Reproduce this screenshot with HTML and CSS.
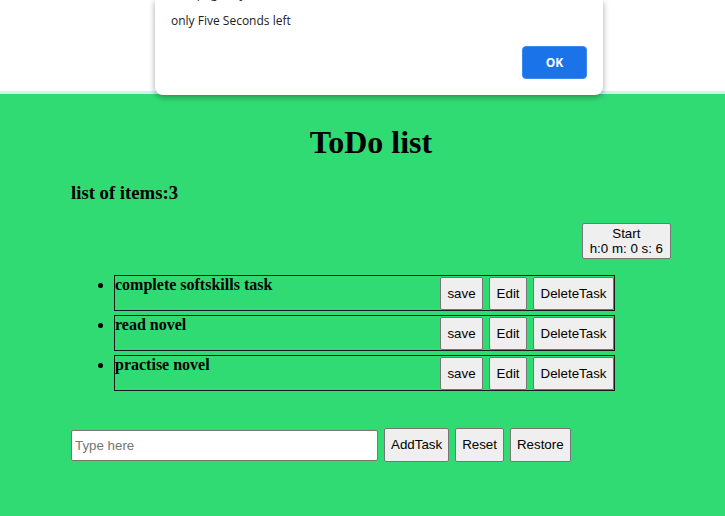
FILE: index.html
```html
<!DOCTYPE html>
<html lang="en">
<head>
<meta charset="utf-8">
<title>ToDo list</title>
<link rel="stylesheet" href="styles.css">
</head>
<body>
<div class="topbar"></div>
<main class="page">
  <div class="container">
    <h1 class="title">ToDo list</h1>
    <h3 class="count">list of items:3</h3>
    <div class="timer-row">
      <button class="btn timer">Start<br>h:0 m: 0 s: 6</button>
    </div>
    <ul class="tasks">
      <li class="task">
        <div class="task-box">
          <b class="task-text">complete softskills task</b>
          <div class="task-actions">
            <button class="btn">save</button>
            <button class="btn">Edit</button>
            <button class="btn">DeleteTask</button>
          </div>
        </div>
      </li>
      <li class="task">
        <div class="task-box">
          <b class="task-text">read novel</b>
          <div class="task-actions">
            <button class="btn">save</button>
            <button class="btn">Edit</button>
            <button class="btn">DeleteTask</button>
          </div>
        </div>
      </li>
      <li class="task">
        <div class="task-box">
          <b class="task-text">practise novel</b>
          <div class="task-actions">
            <button class="btn">save</button>
            <button class="btn">Edit</button>
            <button class="btn">DeleteTask</button>
          </div>
        </div>
      </li>
    </ul>
    <div class="add-row">
      <input class="task-input" type="text" placeholder="Type here">
      <button class="btn add-btn">AddTask</button>
      <button class="btn add-btn">Reset</button>
      <button class="btn add-btn">Restore</button>
    </div>
  </div>
</main>
<div class="dialog">
  <div class="dialog-title">This page says</div>
  <div class="dialog-message">only Five Seconds left</div>
  <div class="dialog-actions">
    <button class="ok-btn">OK</button>
  </div>
</div>
</body>
</html>
```
FILE: styles.css
```css
html, body {
  margin: 0;
  padding: 0;
}

body {
  font-family: "Liberation Serif", "Times New Roman", serif;
  background: #31db74;
  width: 725px;
  height: 516px;
  overflow: hidden;
  position: relative;
}

.topbar {
  height: 91px;
  background: #ffffff;
  border-bottom: 3px solid #c8f6f1;
}

.page {
  background: #31db74;
  height: 422px;
}

.container {
  margin-left: 71px;
  width: 600px;
  padding-top: 30px;
}

.title {
  margin: 0;
  font-size: 32px;
  line-height: 37px;
  font-weight: bold;
  text-align: center;
  color: #000;
}

.count {
  margin: 21px 0 0;
  font-size: 18.72px;
  line-height: 22px;
  font-weight: bold;
  color: #000;
}

.btn {
  font-family: "Liberation Sans", Arial, sans-serif;
  font-size: 13.33px;
  line-height: 15px;
  color: #000;
  background: #efefef;
  border: 1px solid #767676;
  border-radius: 2px;
  padding: 8px 6.5px;
  margin: 0;
}

.timer-row {
  display: flex;
  justify-content: flex-end;
  margin-top: 19px;
}

.timer {
  padding: 2px 7px;
  text-align: center;
}

.tasks {
  margin: 16px 0 0;
  padding-left: 43px;
  font-size: 16px;
}

.task {
  margin-bottom: 4px;
}

.task-box {
  display: flex;
  align-items: flex-start;
  width: 501px;
  height: 36px;
  box-sizing: border-box;
  border: 1px solid #1a1a1a;
}

.task-text {
  flex: 1;
  font-size: 16px;
  line-height: normal;
}

.task-actions {
  display: flex;
  gap: 6px;
  margin-top: 1px;
}

.add-row {
  display: flex;
  align-items: center;
  gap: 6px;
  margin-top: 37px;
}

.task-input {
  width: 307px;
  height: 31px;
  box-sizing: border-box;
  margin: 0;
  padding: 1px 3px;
  border: 1px solid #767676;
  border-radius: 2px;
  background: #fff;
  font-family: "Liberation Sans", Arial, sans-serif;
  font-size: 13.33px;
}

.task-input::placeholder {
  color: #757575;
}

.add-btn {
  line-height: 16px;
  padding: 8px 6px;
}

.dialog {
  position: absolute;
  left: 155px;
  top: 0;
  width: 448px;
  height: 95px;
  box-sizing: border-box;
  padding: 13px 16px 16px;
  background: #fff;
  border-radius: 0 0 8px 8px;
  box-shadow: 0 2px 6px rgba(0, 0, 0, 0.35);
  font-family: "Open Sans", "Noto Sans", sans-serif;
  display: flex;
  flex-direction: column;
}

.dialog-title {
  position: absolute;
  left: 16px;
  top: -14px;
  font-size: 12px;
  line-height: 16px;
  color: #202124;
}

.dialog-message {
  font-size: 12px;
  line-height: 16px;
  color: #202124;
}

.dialog-actions {
  display: flex;
  justify-content: flex-end;
  margin-top: 17px;
}

.ok-btn {
  width: 65px;
  height: 33px;
  background: #1a73e8;
  border: 1px solid #3d89ec;
  border-radius: 4px;
  color: #fff;
  font-family: "Open Sans", "Noto Sans", sans-serif;
  font-size: 12px;
  font-weight: bold;
  padding: 0;
}
```
